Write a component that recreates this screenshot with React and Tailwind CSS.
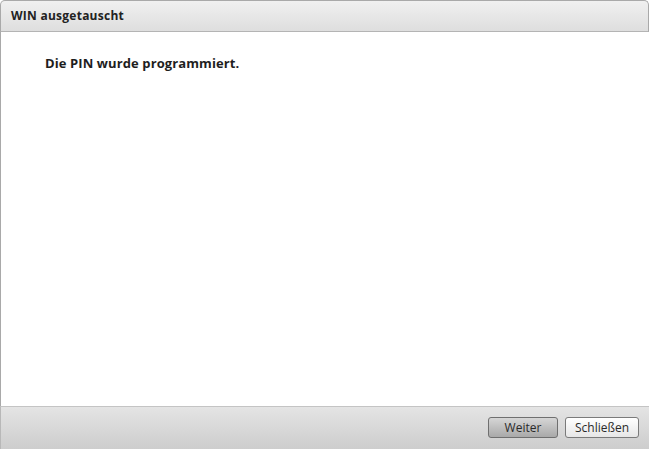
import React from 'react';

export default function App() {
  const font = { fontFamily: '"Open Sans", "DejaVu Sans", sans-serif' };
  return (
    <div className="w-[649px] h-[449px] bg-white flex flex-col overflow-hidden" style={font}>
      <div className="h-[32px] shrink-0 flex items-center px-[10px] rounded-tl-[5px] rounded-tr-[5px] border border-[#a9a9a9] border-b-[#b4b4b4] bg-gradient-to-b from-[#f0f0f0] to-[#dedede]">
        <span className="text-[12px] font-bold text-[#222] tracking-[0.25px]">WIN ausgetauscht</span>
      </div>
      <div className="flex-1 border-l border-[#a9a9a9] pl-[44px] pt-[21px]">
        <p className="text-[13px] font-bold text-[#1e1e1e] leading-[20px] tracking-[0.1px]">Die PIN wurde programmiert.</p>
      </div>
      <div className="h-[43px] shrink-0 flex items-center justify-end gap-[7px] pr-[10px] pb-[1px] border-t border-l border-[#b8b8b8] border-t-[#c4c4c4] bg-gradient-to-b from-[#e4e4e4] to-[#cdcdcd]">
        <button className="w-[70px] h-[21px] rounded-[3px] border border-[#6f6f6f] bg-gradient-to-b from-[#d6d6d6] to-[#a9a9a9] text-[12px] text-[#2a2a2a] leading-none">
          Weiter
        </button>
        <button className="w-[74px] h-[21px] rounded-[3px] border border-[#7a7a7a] bg-gradient-to-b from-[#ffffff] to-[#e6e6e6] text-[12px] text-[#2a2a2a] leading-none">
          Schließen
        </button>
      </div>
    </div>
  );
}
